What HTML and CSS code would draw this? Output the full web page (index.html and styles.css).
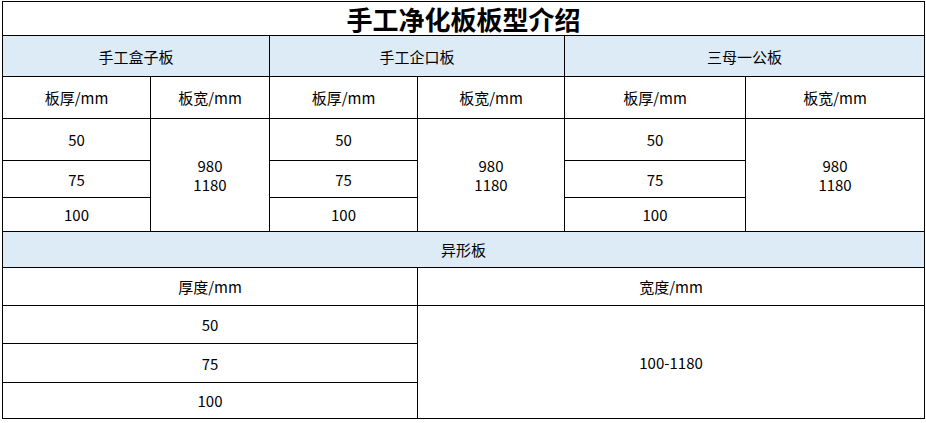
FILE: index.html
```html
<!DOCTYPE html>
<html lang="zh-CN">
<head>
<meta charset="utf-8">
<title>手工净化板板型介绍</title>
<link rel="stylesheet" href="styles.css">
</head>
<body>
<table class="spec">
  <colgroup>
    <col class="c1"><col class="c2"><col class="c3"><col class="c4"><col class="c5"><col class="c6">
  </colgroup>
  <tr class="r-title"><td colspan="6" class="title">手工净化板板型介绍</td></tr>
  <tr class="r-group">
    <td colspan="2" class="group">手工盒子板</td>
    <td colspan="2" class="group">手工企口板</td>
    <td colspan="2" class="group">三母一公板</td>
  </tr>
  <tr class="r-head">
    <td>板厚/mm</td><td>板宽/mm</td>
    <td>板厚/mm</td><td>板宽/mm</td>
    <td>板厚/mm</td><td>板宽/mm</td>
  </tr>
  <tr class="r-a">
    <td>50</td><td rowspan="3" class="multi">980<br>1180</td>
    <td>50</td><td rowspan="3" class="multi">980<br>1180</td>
    <td>50</td><td rowspan="3" class="multi">980<br>1180</td>
  </tr>
  <tr class="r-b"><td>75</td><td>75</td><td>75</td></tr>
  <tr class="r-c"><td>100</td><td>100</td><td>100</td></tr>
  <tr class="r-group2"><td colspan="6" class="group">异形板</td></tr>
  <tr class="r-head2"><td colspan="3">厚度/mm</td><td colspan="3">宽度/mm</td></tr>
  <tr class="r-d"><td colspan="3">50</td><td colspan="3" rowspan="3">100-1180</td></tr>
  <tr class="r-e"><td colspan="3">75</td></tr>
  <tr class="r-f"><td colspan="3">100</td></tr>
</table>
</body>
</html>
```

FILE: styles.css
```css
html, body {
  margin: 0;
  padding: 0;
  background: #ffffff;
}

.spec {
  margin: 1px 0 0 2px;
  border-collapse: collapse;
  table-layout: fixed;
  width: 923px;
  font-family: "SimSun", "Noto Sans CJK SC", sans-serif;
  font-size: 15px;
  color: #000000;
}

.c1 { width: 148px; }
.c2 { width: 119px; }
.c3 { width: 148px; }
.c4 { width: 147px; }
.c5 { width: 181px; }
.c6 { width: 179px; }

.spec td {
  border: 1px solid #000000;
  text-align: center;
  vertical-align: middle;
  padding: 0;
  line-height: 19px;
}

.spec .title {
  font-size: 26px;
  font-weight: 700;
  line-height: 30px;
  padding-top: 1px;
}

.spec .group {
  background: #ddebf7;
}

.r-title  { height: 34px; }
.r-group  { height: 41px; }
.r-head   { height: 42px; }
.r-a      { height: 42px; }
.r-b      { height: 37px; }
.r-c      { height: 34px; }
.r-group2 { height: 36px; }
.r-head2  { height: 38px; }
.r-d      { height: 38px; }
.r-e      { height: 39px; }
.r-f      { height: 36px; }
```
